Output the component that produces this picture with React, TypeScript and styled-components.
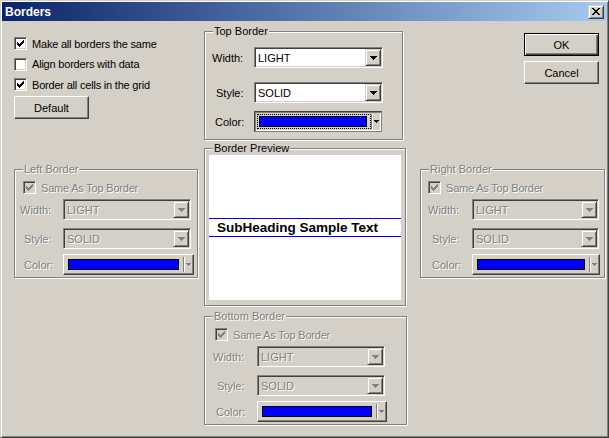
import React from "react";
import styled, { createGlobalStyle, css } from "styled-components";

const GlobalStyle = createGlobalStyle`
  html, body {
    margin: 0;
    padding: 0;
    background: #d4d0c8;
  }
  body {
    font-family: "Liberation Sans", Arial, sans-serif;
    font-size: 11px;
    color: #000;
  }
`;

const raised = css`
  border: 1px solid;
  border-color: #fff #404040 #404040 #fff;
  box-shadow: inset -1px -1px #808080;
`;

const raisedInner = css`
  border: 1px solid;
  border-color: #d4d0c8 #404040 #404040 #d4d0c8;
  box-shadow: inset 1px 1px #fff, inset -1px -1px #808080;
`;

const sunken = css`
  border: 1px solid;
  border-color: #808080 #fff #fff #808080;
  box-shadow: inset 1px 1px #404040, inset -1px -1px #d4d0c8;
`;

const disabledText = css`
  color: #808080;
  text-shadow: 1px 1px 0 #fff;
`;

function CheckMark({ color }: { color: string }) {
  return (
    <svg width="7" height="7" viewBox="0 0 7 7" shapeRendering="crispEdges">
      <path
        d="M0 2h1v3H0zM1 3h1v3H1zM2 4h1v3H2zM3 3h1v3H3zM4 2h1v3H4zM5 1h1v3H5zM6 0h1v3H6z"
        fill={color}
      />
    </svg>
  );
}

function DownArrow({ color, small }: { color: string; small?: boolean }) {
  return small ? (
    <svg width="5" height="3" viewBox="0 0 5 3" shapeRendering="crispEdges">
      <path d="M0 0h5v1H0zM1 1h3v1H1zM2 2h1v1H2z" fill={color} />
    </svg>
  ) : (
    <svg width="7" height="4" viewBox="0 0 7 4" shapeRendering="crispEdges">
      <path d="M0 0h7v1H0zM1 1h5v1H1zM2 2h3v1H2zM3 3h1v1H3z" fill={color} />
    </svg>
  );
}

function CloseGlyph() {
  return (
    <svg width="8" height="7" viewBox="0 0 8 7" shapeRendering="crispEdges">
      <path
        d="M0 0h2v1H0zM6 0h2v1H6zM1 1h2v1H1zM5 1h2v1H5zM2 2h4v1H2zM3 3h2v1H3zM2 4h4v1H2zM1 5h2v1H1zM5 5h2v1H5zM0 6h2v1H0zM6 6h2v1H6z"
        fill="#000"
      />
    </svg>
  );
}

const Window = styled.div`
  box-sizing: border-box;
  width: 609px;
  height: 438px;
  padding: 1px;
  background: #d4d0c8;
  border: 1px solid;
  border-color: #d4d0c8 #404040 #404040 #d4d0c8;
  box-shadow: inset 1px 1px #fff, inset -1px -1px #808080;
  display: flex;
  flex-direction: column;
`;

const TitleBar = styled.div`
  flex: none;
  height: 19px;
  display: flex;
  align-items: center;
  justify-content: space-between;
  padding: 0 3px;
  background: linear-gradient(to right, #0a246a, #a6caf0);
  color: #fff;
  font-weight: bold;
  font-size: 12px;
`;

const CloseButton = styled.div`
  box-sizing: border-box;
  width: 16px;
  height: 14px;
  background: #d4d0c8;
  display: flex;
  align-items: center;
  justify-content: center;
  padding-right: 1px;
  ${raisedInner}
`;

const Body = styled.div`
  display: grid;
  grid-template-columns: 190px 216px 185px;
  grid-template-rows: 117px 168px auto;
  padding: 10px 0 0 12px;
`;

const Options = styled.div`
  display: flex;
  flex-direction: column;
  padding-top: 6px;
`;

const CheckList = styled.div`
  display: flex;
  flex-direction: column;
  gap: 7.5px;
`;

const CheckRow = styled.label<{ $disabled?: boolean }>`
  display: flex;
  align-items: center;
  gap: 5px;
  height: 13px;
  white-space: nowrap;
  letter-spacing: -0.2px;
  ${(p) => p.$disabled && disabledText}
`;

const CheckBox = styled.span<{ $disabled?: boolean }>`
  box-sizing: border-box;
  flex: none;
  width: 13px;
  height: 13px;
  display: flex;
  align-items: center;
  justify-content: center;
  background: ${(p) => (p.$disabled ? "#d4d0c8" : "#fff")};
  ${sunken}
`;

const PushButton = styled.div<{ $default?: boolean }>`
  box-sizing: border-box;
  width: 75px;
  height: 23px;
  display: flex;
  align-items: center;
  justify-content: center;
  background: #d4d0c8;
  ${(p) =>
    p.$default
      ? css`
          border: 1px solid #000;
          box-shadow: inset 1px 1px #fff, inset -1px -1px #404040,
            inset -2px -2px #808080;
        `
      : raised}
`;

const DefaultButton = styled(PushButton)`
  margin-top: 5px;
`;

const ButtonStack = styled.div`
  display: flex;
  flex-direction: column;
  align-items: flex-end;
  gap: 5px;
  padding: 2px 6px 0 0;
`;

const GroupBox = styled.div<{ $w: number; $h: number; $mt?: number }>`
  position: relative;
  box-sizing: border-box;
  width: ${(p) => p.$w}px;
  height: ${(p) => p.$h}px;
  margin-top: ${(p) => p.$mt ?? 0}px;
  border: 1px solid #808080;
  box-shadow: inset 1px 1px #fff, 1px 1px #fff;
  display: flex;
  flex-direction: column;
`;

const GroupLabel = styled.span<{ $disabled?: boolean }>`
  position: absolute;
  top: -7px;
  left: 8px;
  padding: 0 1px;
  line-height: 13px;
  background: #d4d0c8;
  white-space: nowrap;
  ${(p) => p.$disabled && disabledText}
`;

const GroupContent = styled.div<{ $pt: number }>`
  display: flex;
  flex-direction: column;
  padding-top: ${(p) => p.$pt}px;
`;

const FieldRow = styled.div<{ $labelCol: number; $mt: number }>`
  display: grid;
  grid-template-columns: ${(p) => p.$labelCol}px auto;
  align-items: center;
  height: 21px;
  margin-top: ${(p) => p.$mt}px;
`;

const FieldLabel = styled.span<{ $indent: number; $disabled?: boolean }>`
  padding-left: ${(p) => p.$indent}px;
  ${(p) => p.$disabled && disabledText}
`;

const Combo = styled.div<{ $w: number; $disabled?: boolean }>`
  box-sizing: border-box;
  width: ${(p) => p.$w}px;
  height: 21px;
  padding: 1px;
  display: flex;
  background: ${(p) => (p.$disabled ? "#d4d0c8" : "#fff")};
  ${sunken}
`;

const ComboText = styled.span<{ $disabled?: boolean }>`
  flex: 1;
  display: flex;
  align-items: center;
  padding-left: 2px;
  ${(p) => p.$disabled && disabledText}
`;

const DropButton = styled.span`
  box-sizing: border-box;
  width: 16px;
  display: flex;
  align-items: center;
  justify-content: center;
  padding-top: 1px;
  background: #d4d0c8;
  ${raisedInner}
`;

const ColorCombo = styled.div<{ $w: number; $focused?: boolean }>`
  box-sizing: border-box;
  width: ${(p) => p.$w}px;
  height: 21px;
  display: flex;
  align-items: stretch;
  padding: 2px 0 2px 2px;
  background: #d4d0c8;
  ${(p) =>
    p.$focused
      ? css`
          border: 1px solid;
          border-color: #404040 #808080 #808080 #404040;
          box-shadow: inset 1px 1px #808080, inset -1px -1px #fff;
        `
      : raised}
`;

const FocusRing = styled.div<{ $focused?: boolean }>`
  flex: 1;
  display: flex;
  padding: 1px 3px 1px 1px;
  border: 1px dotted ${(p) => (p.$focused ? "#000" : "transparent")};
`;

const Swatch = styled.div`
  flex: 1;
  background: #0000ff;
  border: 1px solid #000;
`;

const ColorSplit = styled.span`
  width: 9px;
  display: flex;
  align-items: center;
  justify-content: center;
  border-left: 1px solid #808080;
  box-shadow: inset 1px 0 #fff;
`;

const PreviewPanel = styled.div`
  flex: 1;
  margin: 6px 4px 5px 4px;
  background: #fff;
  display: flex;
  flex-direction: column;
  justify-content: center;
`;

const SampleBand = styled.div`
  box-sizing: border-box;
  height: 19px;
  display: flex;
  align-items: center;
  padding-left: 8px;
  border-top: 1px solid #0000ff;
  border-bottom: 1px solid #0000ff;
  font-weight: bold;
  font-size: 13.5px;
  white-space: nowrap;
`;

const CheckIndent = styled.div<{ $left: number }>`
  padding-left: ${(p) => p.$left}px;
`;

const BottomCell = styled.div`
  grid-column: 2;
`;

function Check({
  label,
  checked,
  disabled,
}: {
  label: string;
  checked?: boolean;
  disabled?: boolean;
}) {
  return (
    <CheckRow $disabled={disabled}>
      <CheckBox $disabled={disabled}>
        {checked && <CheckMark color={disabled ? "#808080" : "#000"} />}
      </CheckBox>
      {label}
    </CheckRow>
  );
}

function DropCombo({
  value,
  w,
  disabled,
}: {
  value: string;
  w: number;
  disabled?: boolean;
}) {
  return (
    <Combo $w={w} $disabled={disabled}>
      <ComboText $disabled={disabled}>{value}</ComboText>
      <DropButton>
        <DownArrow color={disabled ? "#808080" : "#000"} />
      </DropButton>
    </Combo>
  );
}

function ColorPicker({ w, focused }: { w: number; focused?: boolean }) {
  return (
    <ColorCombo $w={w} $focused={focused}>
      <FocusRing $focused={focused}>
        <Swatch />
      </FocusRing>
      <ColorSplit>
        <DownArrow small color={focused ? "#000" : "#808080"} />
      </ColorSplit>
    </ColorCombo>
  );
}

type LinkedProps = {
  title: string;
  w: number;
  mt?: number;
  checkLeft: number;
  labelCol: number;
  indents: [number, number, number];
  comboW: number;
  colorW: number;
};

function LinkedBorder({
  title,
  w,
  mt,
  checkLeft,
  labelCol,
  indents,
  comboW,
  colorW,
}: LinkedProps) {
  return (
    <GroupBox $w={w} $h={109} $mt={mt}>
      <GroupLabel $disabled>{title}</GroupLabel>
      <GroupContent $pt={11}>
        <CheckIndent $left={checkLeft}>
          <Check label="Same As Top Border" checked disabled />
        </CheckIndent>
        <FieldRow $labelCol={labelCol} $mt={5}>
          <FieldLabel $indent={indents[0]} $disabled>
            Width:
          </FieldLabel>
          <DropCombo value="LIGHT" w={comboW} disabled />
        </FieldRow>
        <FieldRow $labelCol={labelCol} $mt={8}>
          <FieldLabel $indent={indents[1]} $disabled>
            Style:
          </FieldLabel>
          <DropCombo value="SOLID" w={comboW} disabled />
        </FieldRow>
        <FieldRow $labelCol={labelCol} $mt={5}>
          <FieldLabel $indent={indents[2]} $disabled>
            Color:
          </FieldLabel>
          <ColorPicker w={colorW} />
        </FieldRow>
      </GroupContent>
    </GroupBox>
  );
}

export default function App() {
  return (
    <>
      <GlobalStyle />
      <Window>
        <TitleBar>
          Borders
          <CloseButton>
            <CloseGlyph />
          </CloseButton>
        </TitleBar>
        <Body>
          <Options>
            <CheckList>
              <Check label="Make all borders the same" checked />
              <Check label="Align borders with data" />
              <Check label="Border all cells in the grid" checked />
            </CheckList>
            <DefaultButton>Default</DefaultButton>
          </Options>

          <GroupBox $w={199} $h={109}>
            <GroupLabel>Top Border</GroupLabel>
            <GroupContent $pt={15}>
              <FieldRow $labelCol={49} $mt={0}>
                <FieldLabel $indent={7}>Width:</FieldLabel>
                <DropCombo value="LIGHT" w={129} />
              </FieldRow>
              <FieldRow $labelCol={49} $mt={14}>
                <FieldLabel $indent={11}>Style:</FieldLabel>
                <DropCombo value="SOLID" w={129} />
              </FieldRow>
              <FieldRow $labelCol={49} $mt={8}>
                <FieldLabel $indent={10}>Color:</FieldLabel>
                <ColorPicker w={128} focused />
              </FieldRow>
            </GroupContent>
          </GroupBox>

          <ButtonStack>
            <PushButton $default>OK</PushButton>
            <PushButton>Cancel</PushButton>
          </ButtonStack>

          <LinkedBorder
            title="Left Border"
            w={184}
            mt={21}
            checkLeft={8}
            labelCol={48}
            indents={[5, 9, 9]}
            comboW={128}
            colorW={131}
          />

          <GroupBox $w={202} $h={158}>
            <GroupLabel>Border Preview</GroupLabel>
            <PreviewPanel>
              <SampleBand>SubHeading Sample Text</SampleBand>
            </PreviewPanel>
          </GroupBox>

          <LinkedBorder
            title="Right Border"
            w={185}
            mt={21}
            checkLeft={7}
            labelCol={51}
            indents={[7, 11, 11]}
            comboW={127}
            colorW={128}
          />

          <BottomCell>
            <LinkedBorder
              title="Bottom Border"
              w={203}
              checkLeft={10}
              labelCol={52}
              indents={[8, 12, 11]}
              comboW={128}
              colorW={130}
            />
          </BottomCell>
        </Body>
      </Window>
    </>
  );
}
